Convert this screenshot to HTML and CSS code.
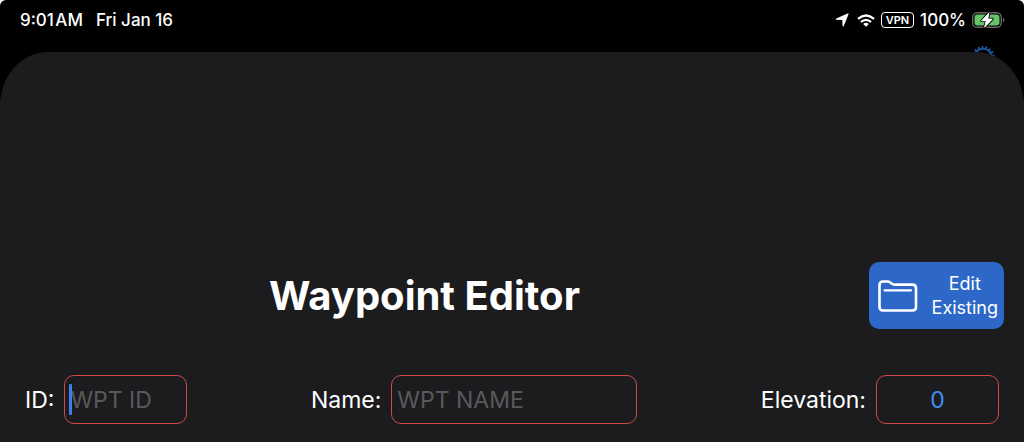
FILE: index.html
```html
<!DOCTYPE html>
<html lang="en">
<head>
<meta charset="utf-8">
<title>Waypoint Editor</title>
<link rel="stylesheet" href="styles.css">
</head>
<body>
<div class="screen">
  <header class="status">
    <div class="status-left"><span>9:01&#8202;AM</span><span>Fri Jan 16</span></div>
    <div class="status-right">
      <svg class="location" viewBox="0 0 14 14" width="14" height="14" aria-hidden="true"><path d="M13.5 1.2 8.8 12.9Q8 14.2 7.5 12.6L7.3 7.1 1.4 6.8Q-.2 6.3 1.3 5.4L12.5.4Q13.9.1 13.5 1.2Z" fill="#fff"/></svg>
      <svg class="wifi" viewBox="0 0 18 13" width="18" height="13" aria-hidden="true"><g fill="none" stroke="#fff" stroke-width="2.2"><path d="M1 4.9Q9-1.9 17 4.9"/><path d="M3.9 8Q9 3.6 14.1 8"/></g><path d="M9 12.7 6.2 9.9Q9 7.8 11.8 9.9Z" fill="#fff"/></svg>
      <span class="vpn">VPN</span>
      <span class="percent">100%</span>
      <svg class="battery" viewBox="0 0 34 18" width="34" height="18" aria-hidden="true"><rect x=".7" y="1.7" width="28.6" height="14.6" rx="4.6" fill="none" stroke="#666" stroke-width="1.4"/><path d="M31 6.8Q34 9 31 11.2Z" fill="#666"/><rect x="2.5" y="3.5" width="25" height="11" rx="3" fill="#65c466"/><path d="M17 1.8 9.6 9.8H14.2L12.6 16.2 20.4 8H15.8Z" fill="#fff" stroke="#000" stroke-width="2.6" stroke-linejoin="round" paint-order="stroke"/><path d="M17 1.8 9.6 9.8H14.2L12.6 16.2 20.4 8H15.8Z" fill="#fff" stroke="#fff" stroke-width=".8" stroke-linejoin="round"/></svg>
    </div>
  </header>
  <svg class="gear" viewBox="0 0 24 24" width="24" height="24" aria-hidden="true"><circle cx="12" cy="12" r="9.2" fill="none" stroke="#1f57a0" stroke-width="2"/><circle cx="12" cy="12" r="10.9" fill="none" stroke="#1f57a0" stroke-width="2" stroke-dasharray="1.9 1.905"/></svg>
  <main class="sheet">
    <div class="heading">
      <h1>Waypoint Editor</h1>
      <button class="edit" type="button">
        <svg viewBox="0 0 40 32" width="40" height="32" aria-hidden="true"><g fill="none" stroke="#fff" stroke-linecap="round" stroke-linejoin="round"><path d="M5 1.5H9.5Q11 1.5 12.2 2.5L14 3.8Q15 4.6 16.5 4.6H34.5Q38 4.6 38 8V27Q38 30.5 34.5 30.5H5Q1.5 30.5 1.5 27V5Q1.5 1.5 5 1.5Z" stroke-width="2.6"/><path d="M6.5 10.3H33" stroke-width="2.2"/></g></svg>
        <span>Edit<br>Existing</span>
      </button>
    </div>
    <form class="fields">
      <div class="field">
        <label for="wpt-id">ID:</label>
        <div class="box"><input class="short" id="wpt-id" type="text" placeholder="WPT ID"><span class="caret"></span></div>
      </div>
      <div class="field">
        <label for="wpt-name">Name:</label>
        <input class="long" id="wpt-name" type="text" placeholder="WPT NAME">
      </div>
      <div class="field">
        <label for="elevation">Elevation:</label>
        <input class="short number" id="elevation" type="text" inputmode="numeric" value="0">
      </div>
    </form>
  </main>
</div>
</body>
</html>
```
FILE: styles.css
```css
* { box-sizing: border-box; }
body {
  margin: 0;
  background: #fff;
  color: #fff;
  font-family: Inter, "Liberation Sans", sans-serif;
}
.screen {
  position: relative;
  display: flex;
  flex-direction: column;
  min-height: 100vh;
  background: #000;
  border-radius: 6px 6px 0 0;
}
.status {
  display: flex;
  justify-content: space-between;
  align-items: center;
  height: 40px;
  margin-bottom: 12px;
  padding: 0 18px 0 20px;
  font-size: 17px;
  font-weight: 500;
}
.status-left { display: flex; gap: 13px; }
.status-right { display: flex; align-items: center; gap: 6px; }
.wifi { margin-left: 2px; }
.vpn {
  padding: 0 4px;
  border: 1px solid #fff;
  border-radius: 4px;
  font-size: 11px;
  font-weight: 600;
  line-height: 14px;
}
.gear { position: absolute; top: 46px; right: 29px; }
.sheet {
  position: relative;
  flex: 1;
  padding: 210px 0 18px;
  background: #1c1c1e;
  border-radius: 48px 48px 0 0 / 54px 54px 0 0;
}
.heading { display: flex; align-items: center; padding-right: 20px; }
h1 {
  flex: 1;
  margin: 0;
  padding-right: 20px;
  font-size: 40px;
  font-weight: 700;
  line-height: 48px;
  text-align: center;
}
.edit {
  display: flex;
  align-items: center;
  justify-content: space-between;
  width: 135px;
  height: 67px;
  padding: 0 6px 0 9px;
  border: 0;
  border-radius: 10px;
  background: #2d68c8;
  color: #fff;
  font: 400 18px/24px Inter, "Liberation Sans", sans-serif;
}
.fields {
  display: flex;
  justify-content: space-between;
  margin-top: 46px;
  padding: 0 25px;
}
.field { display: flex; align-items: center; gap: 10px; font-size: 23px; }
.box { position: relative; display: flex; }
input {
  height: 49px;
  padding: 0 5px;
  border: 1px solid #d04a48;
  border-radius: 10px;
  outline: 0;
  background: transparent;
  color: #fff;
  font: 400 23px/30px Inter, "Liberation Sans", sans-serif;
}
input::placeholder { color: #59595b; opacity: 1; }
.short { width: 123px; }
.long { width: 246px; }
.number { color: #3f8ef6; text-align: center; }
.caret {
  position: absolute;
  top: 9px;
  left: 5px;
  width: 3px;
  height: 31px;
  border-radius: 1px;
  background: #3b82f0;
}
```
